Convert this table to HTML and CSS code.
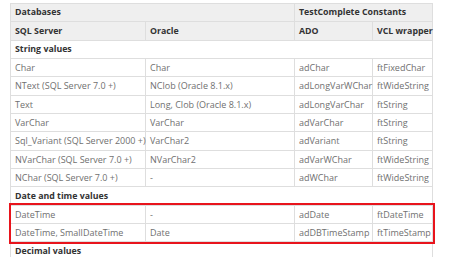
FILE: index.html
```html
<!DOCTYPE html>
<html>
<head>
<meta charset="utf-8">
<link rel="stylesheet" href="styles.css">
</head>
<body>
<table class="types">
  <colgroup>
    <col class="c1"><col class="c2"><col class="c3"><col class="c4">
  </colgroup>
  <thead>
    <tr class="head"><th colspan="2">Databases</th><th colspan="2">TestComplete Constants</th></tr>
    <tr class="head"><th>SQL Server</th><th>Oracle</th><th>ADO</th><th>VCL wrapper</th></tr>
  </thead>
  <tbody>
    <tr class="group"><th colspan="4">String values</th></tr>
    <tr><td>Char</td><td>Char</td><td>adChar</td><td>ftFixedChar</td></tr>
    <tr><td>NText (SQL Server 7.0 +)</td><td>NClob (Oracle 8.1.x)</td><td>adLongVarWChar</td><td>ftWideString</td></tr>
    <tr><td>Text</td><td>Long, Clob (Oracle 8.1.x)</td><td>adLongVarChar</td><td>ftString</td></tr>
    <tr><td>VarChar</td><td>VarChar</td><td>adVarChar</td><td>ftString</td></tr>
    <tr><td>Sql_Variant (SQL Server 2000 +)</td><td>VarChar2</td><td>adVariant</td><td>ftString</td></tr>
    <tr><td>NVarChar (SQL Server 7.0 +)</td><td>NVarChar2</td><td>adVarWChar</td><td>ftWideString</td></tr>
    <tr><td>NChar (SQL Server 7.0 +)</td><td>-</td><td>adWChar</td><td>ftWideString</td></tr>
    <tr class="group"><th colspan="4">Date and time values</th></tr>
  </tbody>
  <tbody class="marked">
    <tr><td>DateTime</td><td>-</td><td>adDate</td><td>ftDateTime</td></tr>
    <tr><td>DateTime, SmallDateTime</td><td>Date</td><td>adDBTimeStamp</td><td>ftTimeStamp</td></tr>
  </tbody>
  <tbody>
    <tr class="group"><th colspan="4">Decimal values</th></tr>
  </tbody>
</table>
</body>
</html>
```
FILE: styles.css
```css
html, body {
  margin: 0;
  background: #fff;
}
body {
  padding: 3px 0 0 10px;
  font-family: "Open Sans", "Liberation Sans", sans-serif;
  font-size: 9px;
  color: #707070;
}
.types {
  border-collapse: collapse;
  table-layout: fixed;
  width: 422px;
}
.c1 { width: 135px; }
.c2 { width: 149px; }
.c3 { width: 78px; }
.c4 { width: 60px; }
.types td, .types th {
  border: 1px solid #dedede;
  height: 18.33px;
  padding: 0 0 0 4px;
  text-align: left;
  white-space: nowrap;
  line-height: 1;
  box-sizing: border-box;
}
.types th {
  font-weight: bold;
  font-size: 8.8px;
  color: #333;
}
.head th {
  background: #efefef;
}
.group th {
  background: #fff;
}
.marked {
  outline: 2px solid #e8141c;
}
```
